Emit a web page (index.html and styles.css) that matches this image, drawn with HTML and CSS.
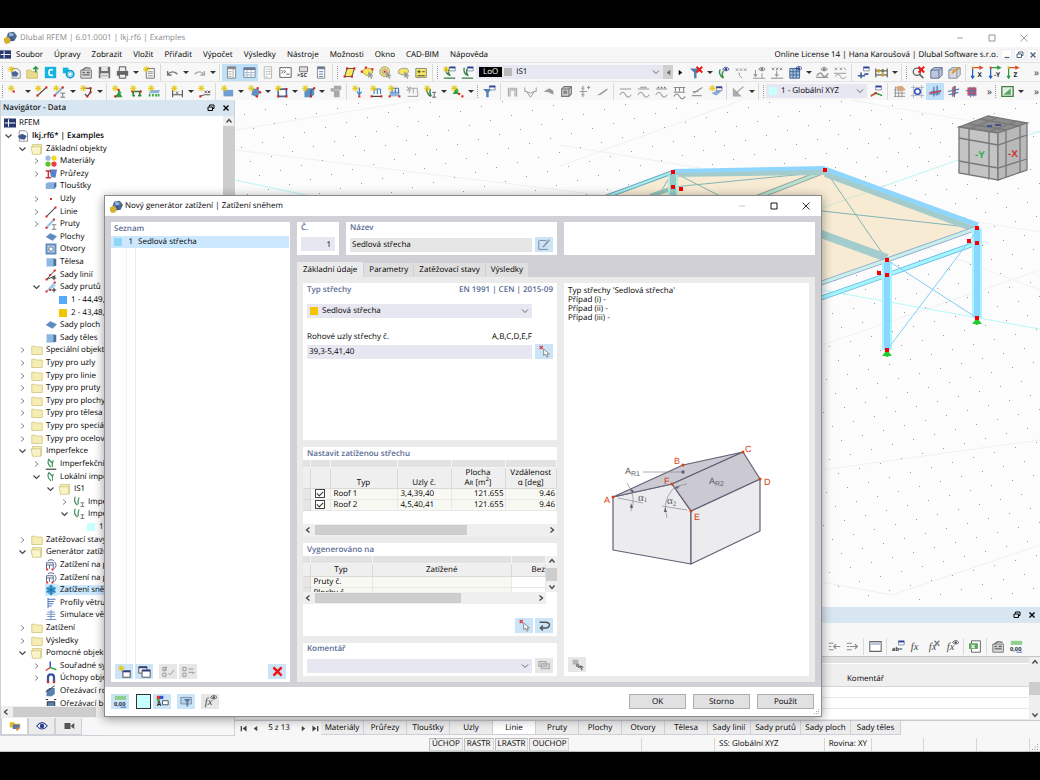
FILE: index.html
```
<!DOCTYPE html>
<html lang="cs">
<head>
  <meta charset="utf-8">
  <title>Dlubal RFEM</title>
  <link rel="stylesheet" href="styles.css">
</head>
<body>
  <div class="app">
    <header class="titlebar">
      <svg class="ic" data-icon="app"></svg>
      <span class="grow">Dlubal RFEM | 6.01.0001 | lkj.rf6 | Examples</span>
      <button class="win" aria-label="Minimalizovat"><svg class="ic" data-icon="min"></svg></button>
      <button class="win" aria-label="Maximalizovat"><svg class="ic" data-icon="max"></svg></button>
      <button class="win" aria-label="Zavřít"><svg class="ic" data-icon="close"></svg></button>
    </header>

    <nav class="menubar">
      <svg class="ic flag" data-icon="rfem"></svg>
      <a href="#">Soubor</a><a href="#">Úpravy</a><a href="#">Zobrazit</a><a href="#">Vložit</a>
      <a href="#">Přiřadit</a><a href="#">Výpočet</a><a href="#">Výsledky</a><a href="#">Nástroje</a>
      <a href="#">Možnosti</a><a href="#">Okno</a><a href="#">CAD-BIM</a><a href="#">Nápověda</a>
      <span class="license">Online License 14 | Hana Karoušová | Dlubal Software s.r.o.</span>
      <button class="mdi" aria-label="Minimalizovat"><svg class="ic" data-icon="mdimin"></svg></button>
      <button class="mdi" aria-label="Obnovit"><svg class="ic" data-icon="restore"></svg></button>
      <button class="mdi" aria-label="Zavřít"><svg class="ic" data-icon="x"></svg></button>
    </nav>

    <div class="toolbar">
      <div class="tools" data-tools=": new open dlubal cloud case save print v page | undo v redo v | *panel *table list console script report | : para poly circ lasso rectsel | : load1 load2"></div>
      <div class="combo combo-case">
        <b class="tag">LoO</b><i class="sw grey"></i>
        <select aria-label="Zatěžovací stav"><option>IS1</option></select>
        <svg class="ic chev" data-icon="chev"></svg>
      </div>
      <button class="step off" aria-label="Předchozí"><svg class="ic" data-icon="prev"></svg></button>
      <button class="step" aria-label="Další"><svg class="ic" data-icon="next"></svg></button>
      <div class="tools" data-tools="funnelx v eyeload vals downeye downvals grideye v beameye beamvals | sup abacus v | : zoomx box boxedit | axx axy axz"></div>
      <span class="more">»</span>
    </div>
    <div class="toolbar">
      <div class="tools" data-tools=": star v line member v polyline v | supp supbeam supsurf | dim v dimxx | surf v hex v opening v solid v extrude | nload mload sload fload impload v sup2 v : funnel | frame momentv plate cube3 cross wedge | bm1 bm2 bm3 bm4 bm5 starsurf | tri v | :"></div>
      <div class="combo combo-cs">
        <i class="sw cyan"></i>
        <select aria-label="Souřadný systém"><option>1 - Globální XYZ</option></select>
        <svg class="ic chev" data-icon="chev"></svg>
      </div>
      <div class="tools" data-tools="csys | handgrid snap *plane1 plane2 plane3"></div>
      <span class="more">»</span>
      <div class="tools" data-tools=": green v"></div>
      <span class="more last">»</span>
    </div>

    <main class="main">
      <aside class="nav">
        <div class="dock-head">
          <b class="grow">Navigátor - Data</b>
          <svg class="ic" data-icon="restore"></svg>
          <svg class="ic" data-icon="x"></svg>
        </div>
        <div class="tree-wrap">
          <ul class="tree" id="tree"></ul>
          <div class="vscroll"><svg class="ic" data-icon="up"></svg><i class="thumb"></i></div>
        </div>
        <div class="hscroll nav-scroll"><svg class="ic" data-icon="left"></svg><i class="thumb"></i></div>
        <div class="nav-tabs">
          <button class="on" aria-label="Data"><svg class="ic" data-icon="navdata"></svg></button>
          <button aria-label="Zobrazit"><svg class="ic" data-icon="eye"></svg></button>
          <button aria-label="Pohledy"><svg class="ic" data-icon="cam"></svg></button>
        </div>
      </aside>

      <section class="work">
        <svg class="scene" viewBox="235 100 805 507" preserveAspectRatio="xMaxYMin slice">
          <g stroke="#f0f0f0" fill="none">
            <path d="M560 166L742 100M560 145L700 168M850 100L1040 133M822 345L1040 270M840 200L1040 232M235 130L420 100M235 150L600 195M822 208L1040 290"/>
            <path d="M822 582L892 595L1040 545M822 470L1040 440"/>
          </g>
          <g id="dots" fill="#999"></g>
          <path d="M822 208L1040 131M822 290L1040 329M235 180L310 196" stroke="#b8f6f6" fill="none"/>

          <!-- roof -->
          <path d="M600 200L673 174L825 170L977 228L887 260L810 287L700 290z" fill="#f7ebd3"/>
          <path d="M822 208L887 185" stroke="#cfe9cf"/>
          <g stroke="#82b5b5" fill="none">
            <path d="M825 170L887 260M822 211L977 228M673 187L825 172M673 172L720 196M673 172L658 196"/>
          </g>
          <path d="M825 171L750 200" stroke="#8f9da5" stroke-width="5"/>
          <path d="M825 171L750 200" stroke="#b7e2cb" stroke-width="3"/>
          <path d="M673 174L825 172" stroke="#a5cccc" stroke-width="6"/>
          <path d="M673 171L825 168" stroke="#8fd6ff" stroke-width="4"/>
          <path d="M825 174L974 229" stroke="#a5cccc" stroke-width="6"/>
          <path d="M825 169L978 225" stroke="#8fd6ff" stroke-width="5"/>
          <path d="M600 199L673 172" stroke="#6ea8c8" stroke-width="4"/>
          <path d="M600 199L673 172" stroke="#a5f0e8" stroke-width="2"/>
          <path d="M650 196L673 188" stroke="#92c4bb" stroke-width="4"/>
          <path d="M673 175V196" stroke="#b4eedc" stroke-width="10"/>
          <path d="M673 175V196" stroke="#98ccc8" stroke-width="6"/>
          <path d="M810 230L887 258" stroke="#a5cccc" stroke-width="8"/>
          <g fill="none">
            <path d="M810 287L887 260L977 228" stroke="#8fa9d8" stroke-width="5"/>
            <path d="M810 287L887 260L977 228" stroke="#c9efe6" stroke-width="3"/>
            <path d="M810 302L887 275L977 243" stroke="#6cbce8" stroke-width="5"/>
            <path d="M810 302L887 275L977 243" stroke="#a5f5fc" stroke-width="3"/>
          </g>
          <!-- columns -->
          <path d="M887 262V350M977 228V318" stroke="#a9f5ff" stroke-width="10"/>
          <path d="M887 262V350M977 228V318" stroke="#8ad8ff" stroke-width="6"/>
          <path d="M887 260L977 318M887 350L976 232" stroke="#7fd0f5"/>
          <path d="M882 356l5-6 5 6zM972 324l5-6 5 6z" fill="#22c832"/>
          <path d="M887 355h0M977 323h0" stroke="#22c832" stroke-width="4" stroke-linecap="round"/>
          <g id="nodes" fill="#f60000"></g>

          <!-- view cube -->
          <g stroke="#777" stroke-width="1.3">
            <path d="M959 127L988 116L1027 123L998 133z" fill="#8d8d8d"/>
            <path d="M959 127L998 133V180L959 173z" fill="#c4c4c4"/>
            <path d="M998 133L1027 123V170L998 180z" fill="#b9b9b9"/>
            <path d="M969 129V175M989 132V178M959 138L998 145L1027 135M959 161L998 168L1027 159M1006 131V177M1020 126V172M969 124L1007 130M980 119L1019 126M969 129L997 118M988 132L1017 121" fill="none"/>
          </g>
          <text x="975" y="158" class="cube-y">-Y</text>
          <text x="1008" y="157" class="cube-x">-X</text>
          <path d="M987 126h5M995 125h6" stroke="#44508c" stroke-width="2"/>
        </svg>

        <div class="dock-head">
          <b class="grow"></b>
          <svg class="ic" data-icon="restore"></svg>
          <svg class="ic" data-icon="x"></svg>
        </div>
        <div class="tools table-tools" data-tools="rowin rowout | tblhead | abbox fx fxx fxeye | excel | case num"></div>
        <div class="sheet">
          <table>
            <thead>
              <tr class="strip"><th></th><th></th></tr>
              <tr><th></th><th>Komentář</th></tr>
            </thead>
            <tbody>
              <tr><td></td><td></td></tr>
              <tr><td></td><td></td></tr>
              <tr><td></td><td></td></tr>
            </tbody>
          </table>
          <div class="vscroll spread"><svg class="ic" data-icon="up"></svg><i class="thumb"></i><svg class="ic" data-icon="down"></svg></div>
        </div>
        <div class="sheet-tabs">
          <button class="pg" aria-label="První"><svg class="ic" data-icon="first"></svg></button>
          <button class="pg" aria-label="Předchozí"><svg class="ic" data-icon="prev"></svg></button>
          <span class="pages">5 z 13</span>
          <button class="pg" aria-label="Další"><svg class="ic" data-icon="next"></svg></button>
          <button class="pg" aria-label="Poslední"><svg class="ic" data-icon="last"></svg></button>
          <button class="tab">Materiály</button><button class="tab">Průřezy</button><button class="tab">Tloušťky</button>
          <button class="tab">Uzly</button><button class="tab on">Linie</button><button class="tab">Pruty</button>
          <button class="tab">Plochy</button><button class="tab">Otvory</button><button class="tab">Tělesa</button>
          <button class="tab">Sady linií</button><button class="tab wide">Sady prutů</button>
          <button class="tab wide">Sady ploch</button><button class="tab wide">Sady těles</button>
        </div>
      </section>
    </main>

    <footer class="status">
      <span class="box">ÚCHOP</span><span class="box">RASTR</span><span class="box">LRASTR</span><span class="box">OUCHOP</span>
      <span class="cell w73"></span><span class="cell w73"></span>
      <span class="cell w109">SS: Globální XYZ</span>
      <span class="cell w47">Rovina: XY</span>
      <span class="cell w53"></span><span class="cell w53"></span><span class="cell w53"></span>
      <svg class="ic grip" data-icon="grip"></svg>
    </footer>

    <div class="dialog" role="dialog" aria-label="Nový generátor zatížení">
      <header class="dlg-title">
        <svg class="ic" data-icon="app"></svg>
        <span class="grow">Nový generátor zatížení | Zatížení sněhem</span>
        <button class="win faint" aria-label="Minimalizovat"><svg class="ic" data-icon="min"></svg></button>
        <button class="win" aria-label="Maximalizovat"><svg class="ic" data-icon="max"></svg></button>
        <button class="win" aria-label="Zavřít"><svg class="ic" data-icon="close"></svg></button>
      </header>

      <div class="dlg-body">
        <section class="list-pane">
          <h2>Seznam</h2>
          <div class="list">
            <div class="list-row"><i class="sw sky"></i><span class="num">1</span><span class="name">Sedlová střecha</span></div>
          </div>
          <div class="list-tools">
            <button class="ibtn" aria-label="Nový"><svg class="ic" data-icon="newwin"></svg></button>
            <button class="ibtn" aria-label="Kopírovat"><svg class="ic" data-icon="copywin"></svg></button>
            <button class="ibtn off gap" aria-label="Vybrat vše"><svg class="ic" data-icon="checks"></svg></button>
            <button class="ibtn off" aria-label="Obrátit výběr"><svg class="ic" data-icon="checks2"></svg></button>
            <button class="ibtn last" aria-label="Smazat"><svg class="ic" data-icon="redx"></svg></button>
          </div>
        </section>

        <div class="right-pane">
          <div class="head-row">
            <div class="card c-num">
              <label for="no">Č.</label>
              <input id="no" class="field right" value="1">
            </div>
            <div class="card c-name">
              <label for="name">Název</label>
              <div class="line">
                <input id="name" class="field ro grow" value="Sedlová střecha" readonly>
                <button class="ibtn" aria-label="Upravit"><svg class="ic" data-icon="edit"></svg></button>
              </div>
            </div>
            <div class="card grow"></div>
          </div>

          <div class="tabs">
            <button class="on">Základní údaje</button><button>Parametry</button><button>Zatěžovací stavy</button><button>Výsledky</button>
          </div>

          <div class="page">
            <div class="form-col">
              <div class="card c-type">
                <h2><span>Typ střechy</span><span>EN 1991 | CEN | 2015-09</span></h2>
                <div class="combo combo-roof">
                  <i class="sw gold"></i>
                  <select aria-label="Typ střechy"><option>Sedlová střecha</option></select>
                  <svg class="ic chev" data-icon="chev"></svg>
                </div>
                <div class="label-row"><label for="nodesIn">Rohové uzly střechy č.</label><span>A,B,C,D,E,F</span></div>
                <div class="line">
                  <input id="nodesIn" class="field grow" value="39,3-5,41,40">
                  <button class="ibtn" aria-label="Vybrat uzly"><svg class="ic" data-icon="pick"></svg></button>
                </div>
              </div>

              <div class="card c-set">
                <h2>Nastavit zatíženou střechu</h2>
                <table class="grid">
                  <colgroup><col class="k7"><col class="k20"><col class="k67"><col class="k54"><col class="k54"><col></colgroup>
                  <thead>
                    <tr class="strip"><th></th><th></th><th></th><th></th><th></th><th></th></tr>
                    <tr class="tall"><th></th><th></th><th>Typ</th><th>Uzly č.</th><th>Plocha<br>A<small>R</small> [m<sup>2</sup>]</th><th>Vzdálenost<br>α [deg]</th></tr>
                  </thead>
                  <tbody>
                    <tr><th></th><td><input type="checkbox" aria-label="Roof 1" checked></td><td>Roof 1</td><td>3,4,39,40</td><td class="n">121.655</td><td class="n">9.46</td></tr>
                    <tr><th></th><td><input type="checkbox" aria-label="Roof 2" checked></td><td>Roof 2</td><td>4,5,40,41</td><td class="n">121.655</td><td class="n">9.46</td></tr>
                  </tbody>
                </table>
                <div class="hscroll"><svg class="ic" data-icon="left"></svg><i class="thumb t60"></i><svg class="ic end" data-icon="right"></svg></div>
              </div>

              <div class="card c-gen">
                <h2>Vygenerováno na</h2>
                <div class="gen-wrap">
                  <div class="gen-clip">
                    <table class="grid">
                      <colgroup><col class="k7"><col class="k62"><col><col class="k34"></colgroup>
                      <thead>
                        <tr class="strip"><th></th><th></th><th></th><th></th></tr>
                        <tr class="mid"><th></th><th>Typ</th><th>Zatížené</th><th class="e">Bez</th></tr>
                      </thead>
                      <tbody>
                        <tr><th></th><td>Pruty č.</td><td></td><td class="w"></td></tr>
                        <tr><th></th><td>Plochy č.</td><td></td><td class="w"></td></tr>
                      </tbody>
                    </table>
                  </div>
                  <div class="vscroll spread"><svg class="ic" data-icon="up"></svg><i class="thumb"></i><svg class="ic" data-icon="down"></svg></div>
                </div>
                <div class="hscroll short"><svg class="ic" data-icon="left"></svg><i class="thumb t60"></i><svg class="ic end" data-icon="right"></svg></div>
                <div class="gen-tools">
                  <button class="ibtn" aria-label="Vybrat"><svg class="ic" data-icon="pick"></svg></button>
                  <button class="ibtn" aria-label="Zpět"><svg class="ic" data-icon="back"></svg></button>
                </div>
              </div>

              <div class="card c-com">
                <label for="com">Komentář</label>
                <div class="line">
                  <div class="combo grow">
                    <select id="com"><option></option></select>
                    <svg class="ic chev" data-icon="chev"></svg>
                  </div>
                  <button class="ibtn off" aria-label="Komentáře"><svg class="ic" data-icon="comments"></svg></button>
                </div>
              </div>
            </div>

            <div class="card preview">
              <p>Typ střechy 'Sedlová střecha'<br>Případ (i) -<br>Případ (ii) -<br>Případ (iii) -</p>
              <svg class="house" viewBox="600 440 180 130">
                <g stroke="#625f76" stroke-width="1.2" stroke-linejoin="round">
                  <path d="M613 497L672 484L691 511V564L613 550z" fill="#ececee"/>
                  <path d="M691 511L760 479V531L691 564z" fill="#ececee"/>
                  <path d="M613 497L683 465L743 452L672 484z" fill="#cbc9d1"/>
                  <path d="M672 484L743 452L760 479L691 511z" fill="#cbc9d1"/>
                </g>
                <g stroke="#8a8894" stroke-width=".7" fill="none">
                  <path d="M643 472H683M618 498L643 503M627 483Q637 497 631 511M662 506L687 510M687 484Q675 486 672 490Q662 502 667 518"/>
                </g>
                <circle cx="683" cy="472" r="1.7" fill="#625f76"/>
                <path d="M633 493l-3-3 1-1 3 2zM631 503l2 5h-3zM665 507l2 5h-3zM675 487l5-1-3 3z" fill="#625f76"/>
                <g fill="#d8400f">
                  <circle cx="613" cy="497" r="1.5"/><circle cx="683" cy="465" r="1.5"/><circle cx="743" cy="452" r="1.5"/>
                  <circle cx="760" cy="479" r="1.5"/><circle cx="691" cy="511" r="1.5"/><circle cx="672" cy="484" r="1.5"/>
                  <text x="604" y="503">A</text><text x="674" y="464">B</text><text x="745" y="452">C</text>
                  <text x="764" y="485">D</text><text x="694" y="520">E</text><text x="664" y="484">F</text>
                </g>
                <g fill="#5d5a68">
                  <text x="625" y="474">A<tspan class="sub" dy="2">R1</tspan></text>
                  <text x="709" y="484">A<tspan class="sub" dy="2">R2</tspan></text>
                  <text class="alpha" x="638" y="501">α<tspan class="sub" dy="1">1</tspan></text>
                  <text class="alpha" x="667" y="504">α<tspan class="sub" dy="2">2</tspan></text>
                </g>
              </svg>
              <button class="ibtn off" aria-label="Zobrazení"><svg class="ic" data-icon="render"></svg></button>
            </div>
          </div>
        </div>
      </div>

      <footer class="dlg-foot">
        <button class="ibtn" aria-label="Jednotky"><svg class="ic" data-icon="num"></svg></button>
        <i class="swatch"></i>
        <button class="ibtn" aria-label="Barvy"><svg class="ic" data-icon="colors"></svg></button>
        <button class="ibtn gap" aria-label="Pohled"><svg class="ic" data-icon="view"></svg></button>
        <button class="ibtn off gap" aria-label="Vzorec"><svg class="ic" data-icon="fxeye"></svg></button>
        <span class="grow"></span>
        <button class="push">OK</button><button class="push">Storno</button><button class="push">Použít</button>
        <svg class="ic grip" data-icon="grip"></svg>
      </footer>
    </div>
  </div>
  <script src="script.js"></script>
</body>
</html>
```

FILE: styles.css
```
* { box-sizing: border-box; }
body {
  margin: 0; padding: 28px 0 28px; height: 100vh; background: #000; color: #000;
  font: 8px/10px "Open Sans", "Noto Sans", sans-serif; overflow: hidden;
  text-rendering: geometricPrecision;
}
button, input, select { font: inherit; color: inherit; border: 0; padding: 0; margin: 0; background: none; border-radius: 0; text-rendering: inherit; }
select { appearance: none; flex: 1; min-width: 0; }
h2, label { display: block; margin: 0; font-size: 8px; line-height: 10px; font-weight: 600; color: #5a6b94; }
i { display: block; }
.ic { display: block; width: 13px; height: 13px; flex: none; overflow: visible; }
.grow { flex: 1; }

.app { position: relative; height: 100%; display: flex; flex-direction: column; background: #f7f7f7; overflow: hidden; }

/* window frame and menus */
.titlebar { display: flex; align-items: center; height: 19px; background: #fff; color: #8a8a8a; padding: 0 0 0 4px; gap: 3px; }
.win { width: 32px; height: 18px; display: grid; place-items: center; }
.titlebar .win { color: #888; margin-left: -3px; }
.win .ic { width: 8px; height: 8px; }
.faint { color: #bbb; }
.menubar { display: flex; align-items: center; height: 15px; gap: 11px; padding-right: 2px; font-weight: 500; background: #f6f6f6; }
.menubar a { color: inherit; text-decoration: none; }
.flag { width: 11px; margin-right: -6px; }
.license { margin-left: auto; margin-right: -8px; }
.mdi { width: 11px; height: 11px; background: #fff; display: grid; place-items: center; margin-right: -9px; border: 1px solid #eee; flex: none; }
.mdi:last-child { margin-right: 0; }
.mdi .ic { width: 8px; height: 8px; color: #51627e; }

.toolbar { display: flex; align-items: center; height: 19px; border-top: 1px solid #e4e4e4; background: #f7f7f7; }
.tools { display: flex; align-items: center; flex: none; }
.tb { width: 18px; height: 17px; display: grid; place-items: center; flex: none; }
.tb.on { background: #bfe0f7; }
.drop { width: 9px; height: 17px; display: grid; place-items: center; flex: none; }
.drop::after { content: ""; border: 3px solid transparent; border-top: 3px solid #333; border-bottom: 0; }
.sep { width: 1px; height: 17px; background: #dadada; margin: 0 2px; }
.handle { width: 1px; height: 13px; margin: 0 2px; border-left: 1px dotted #9a9a9a; }
.more { margin: 0 1px 0 auto; color: #444; font-size: 10px; padding-left: 5px; }
.more.last { margin-left: 4px; }
.combo { display: flex; align-items: center; gap: 4px; height: 14px; background: #e7e7f1; padding: 0 3px; }
.combo select { height: 14px; font-weight: 500; }
.chev { width: 8px; height: 8px; color: #555; }
.sw { width: 8px; height: 8px; flex: none; }
.grey { background: #b9b9b9; }
.cyan { background: #c8ffff; }
.sky { background: #8dd6f5; }
.gold { background: #f5c400; }
.combo-case { width: 187px; }
.combo-cs { width: 101px; }
.tag { background: #000; color: #fff; padding: 0 4px; font-weight: 500; }
.combo-case .tag { margin-right: -2px; }
.step { width: 10px; height: 14px; display: grid; place-items: center; }
.step .ic { width: 7px; height: 7px; }
.step.off { background: #d0d0d0; color: #666; }
.step:not(.off) { width: 14px; }

/* docked navigator */
.main { flex: 1; min-height: 0; display: flex; }
.nav { width: 235px; flex: none; display: flex; flex-direction: column; border: solid #cfcfd8; border-width: 0 1px 1px; background: #f7f7f7; }
.dock-head { display: flex; align-items: center; gap: 7px; height: 16px; flex: none; padding: 0 4px 0 2px; background: #d8e6f2; }
.dock-head .ic { width: 8px; height: 8px; }
.dock-head b { font-weight: 600; color: #222; }
.tree-wrap { flex: 1; min-height: 0; display: flex; overflow: hidden; background: #fff; }
.tree { flex: 1; list-style: none; margin: 1px 0 -4px; padding: 0; display: grid; grid-auto-rows: minmax(0, 1fr); white-space: nowrap; }
.tree li { display: flex; align-items: center; gap: 2px; overflow: hidden; font-weight: 500; }
.tree .ic { width: 12px; height: 12px; }
.tree .exp { width: 12px; height: 8px; color: #666; }
.tree .pic { margin-right: 1px; }
.tree .sw { margin-right: 2px; }
.tree .l0 .exp { display: none; }
.tree .bold { font-weight: 600; }
.tree .sel span { background: #cce8ff; flex: 1; margin-left: -3px; padding-left: 3px; }
.tree .sel .pic { background: #cce8ff; }
.l0 { padding-left: 3px; }
.l1 { padding-left: 2px; }
.l2 { padding-left: 16px; }
.l3 { padding-left: 30px; }
.l4 { padding-left: 44px; }
.l5 { padding-left: 58px; }
.l6 { padding-left: 72px; }

.vscroll { width: 11px; background: #efefef; display: flex; flex-direction: column; align-items: center; flex: none; }
.vscroll .ic, .hscroll .ic { width: 10px; height: 10px; padding: 1px; }
.vscroll .thumb { width: 11px; background: #cdcdcd; height: 540px; }
.vscroll.spread { justify-content: space-between; }
.vscroll.spread .thumb { height: 13px; }
.hscroll { height: 12px; display: flex; align-items: center; background: #efefef; gap: 2px; flex: none; }
.hscroll .thumb { height: 10px; width: 83px; background: #cdcdcd; }
.hscroll .t60 { width: 60%; }
.hscroll .end { margin-left: auto; }
.nav-tabs { display: flex; height: 17px; }
.nav-tabs button { width: 27px; display: grid; place-items: center; border: 1px solid #d0d0d8; border-top: 0; background: #ececec; }
.nav-tabs .on { background: #fff; }
.nav-tabs .ic { width: 12px; height: 12px; }

/* model view and table dock */
.work { flex: 1; min-width: 0; display: flex; flex-direction: column; }
.scene { flex: 1; min-height: 0; width: 100%; background: #fcfcfc; }
.cube-y, .cube-x { font: bold 10px "Liberation Sans", sans-serif; fill: #2fae43; }
.cube-x { fill: #c33; }
.table-tools { height: 34px; padding: 14px 15px 0 0; justify-content: flex-end; border-bottom: 1px solid #c4c4cc; }
.sheet { display: flex; height: 63px; flex: none; }
.sheet table { flex: 1; border-collapse: collapse; table-layout: fixed; }
.sheet th { background: #efefef; height: 23px; vertical-align: bottom; font-weight: 500; padding: 0 0 2px; border-bottom: 1px solid #d5d5d5; }
.sheet .strip th { height: 6px; padding: 0; background: #e2e2e2; border-bottom: 1px solid #fff; }
.sheet th:last-child { width: 327px; }
.sheet td { background: #fff; height: 11px; border-bottom: 1px solid #e8e8e8; padding: 0; }
.sheet-tabs { display: flex; height: 15px; flex: none; border-top: 1px solid #c9c9d2; margin-bottom: 1px; padding-left: 2px; }
.pg { width: 12px; display: grid; place-items: center; color: #444; }
.pg .ic { width: 7px; height: 7px; }
.pages { width: 36px; text-align: center; line-height: 14px; }
.tab { width: 43px; background: #ececec; border: 1px solid #cfcfd8; border-top: 0; border-left: 0; font-weight: 500; white-space: nowrap; }
.tab.on { background: #fff; }
.tab.wide { width: 50px; }

.status { display: flex; align-items: stretch; height: 16px; flex: none; padding: 2px 1px 0 429px; gap: 1px; border-bottom: 1px solid #bcc4bf; }
.status .box { border: 1px solid #d5d5d5; border-left-color: #bbb; border-top-color: #bbb; padding: 0 2px; font-weight: 500; background: #f0f0f0; }
.status .cell { border-right: 1px solid #d6d6d6; padding: 1px 3px; font-weight: 500; white-space: nowrap; }
.w73 { width: 72px; }
.w109 { width: 109px; }
.w47 { width: 46px; }
.w53 { width: 52px; }
.grip { margin-left: auto; align-self: flex-end; width: 8px; height: 8px; }

/* dialog floats over the work area */
.dialog {
  position: absolute; left: 104px; top: 167px; width: 718px; height: 522px; display: flex; flex-direction: column;
  background: #fff; border: 1px solid #8b8b8b; box-shadow: 0 2px 10px rgba(0, 0, 0, .4);
}
.dlg-title { display: flex; align-items: center; height: 20px; padding-left: 5px; gap: 2px; flex: none; }
.dlg-title .win { width: 30px; }
.dlg-body { flex: 1; min-height: 0; display: flex; gap: 7px; padding: 6px 6px 5px; background: #d0d0d6; }
.list-pane { width: 179px; display: flex; flex-direction: column; background: #fff; }
.list-pane h2 { padding: 2px 3px; }
.list { flex: 1; background: linear-gradient(#f1f1f1, #f1f1f1) 15px 0 / 1px 100% no-repeat, linear-gradient(#ebebeb, #ebebeb) 24px 0 / 1px 100% no-repeat; }
.list-row { display: flex; align-items: center; height: 12px; margin-right: 1px; padding-left: 3px; background: #cce8ff; font-weight: 500; }
.list-row .num { width: 13px; text-align: right; padding-right: 2px; }
.list-row .name { padding-left: 3px; }
.list-tools { display: flex; gap: 2px; padding: 0 4px 3px; }
.ibtn { width: 18px; height: 15px; background: #cbe4f7; display: grid; place-items: center; flex: none; }
.ibtn.off { background: #e7e7e7; }
.ibtn.gap { margin-left: 4px; }
.ibtn.last { margin-left: auto; }

.right-pane { flex: 1; min-width: 0; display: flex; flex-direction: column; }
.head-row { display: flex; gap: 7px; height: 33px; }
.card { background: #fff; padding: 1px 4px; }
.c-num { width: 42px; }
.c-name { width: 211px; }
.head-row label { margin-bottom: 4px; }
.line { display: flex; gap: 3px; align-items: center; }
.field { height: 14px; background: #e7e7f1; padding: 0 2px; width: 100%; min-width: 0; font-weight: 500; }
.field.ro { background: #e6e6e6; }
.right { text-align: right; padding-right: 4px; }
.tabs { display: flex; margin-top: 7px; height: 15px; gap: 1px; align-items: flex-end; }
.tabs button { height: 14px; padding: 0 5px; background: #dfdfdf; font-weight: 500; white-space: nowrap; }
.tabs .on { background: #ebebeb; height: 15px; padding: 0 6px; }
.page { flex: 1; min-height: 0; display: flex; gap: 7px; padding: 6px; background: #ebebeb; }
.form-col { width: 254px; display: flex; flex-direction: column; gap: 7px; }
.form-col .card h2 { padding: 1px 0; display: flex; justify-content: space-between; }
.c-type { flex: 1; }
.combo-roof { margin: 8px 21px 14px 0; }
.label-row { display: flex; justify-content: space-between; margin: 0 21px 2px 0; font-weight: 500; }
.label-row label { color: #000; font-weight: 500; }
.form-col .c-set, .form-col .c-gen { padding-left: 0; padding-right: 0; }
.form-col .c-set h2, .form-col .c-gen h2 { padding-left: 4px; }
.c-set { height: 89px; display: flex; flex-direction: column; }
.c-set .hscroll { margin-top: auto; margin-bottom: -1px; }
.grid { width: 100%; table-layout: fixed; border-collapse: collapse; }
.grid th { background: #efefef; border: 1px solid #d9d9d9; border-width: 0 1px 1px 0; padding: 0; font-weight: 500; vertical-align: bottom; }
.grid .strip th { height: 7px; background: #e2e2e2; border-color: #f5f5f5; }
.grid .tall th { height: 21px; line-height: 10px; }
.grid .mid th { height: 13px; vertical-align: middle; }
.grid .e { text-align: right; }
.grid small, .grid sup { font-size: 6px; line-height: 1px; }
.grid td { height: 11px; line-height: 10px; padding: 0 3px; background: #f9f9f3; border: 1px solid #e8e8e8; border-width: 0 1px 1px 0; font-weight: 500; white-space: nowrap; }
.grid .n { text-align: right; padding-right: 1px; }
.grid .w { background: #fff; }
.grid tbody th { background: #e6e6e6; }
.k7 { width: 7px; }
.k20 { width: 20px; }
.k67 { width: 67px; }
.k54 { width: 54px; }
.k62 { width: 62px; }
.k34 { width: 34px; }
input[type=checkbox] { appearance: none; display: block; width: 10px; height: 9px; margin: 0 auto; background: #fff; border: 1px solid #444; }
input[type=checkbox]:checked::after { content: ""; display: block; width: 5px; height: 3px; margin: 1px; border: solid #333; border-width: 0 0 1px 1px; transform: rotate(-45deg); }
.c-gen { height: 93px; }
.gen-wrap { display: flex; height: 36px; }
.gen-clip { flex: 1; overflow: hidden; }
.hscroll.short { margin-right: 11px; }
.gen-tools { display: flex; justify-content: flex-end; gap: 2px; padding: 14px 4px 0 0; }
.c-com { height: 33px; }
.c-com label { margin-bottom: 4px; }
.preview { flex: 1; display: flex; flex-direction: column; }
.preview p { margin: 2px 0 0; line-height: 9px; font-weight: 500; }
.preview .house { width: 180px; margin: 118px 0 0 32px; font: 9px "Liberation Sans", sans-serif; }
.house .sub { font-size: 7px; }
.house .alpha { font-size: 11px; font-family: "Liberation Serif", serif; }
.preview .ibtn { margin-top: auto; margin-bottom: 3px; }

.dlg-foot { display: flex; align-items: center; height: 29px; padding: 0 7px 0 6px; gap: 2px; flex: none; position: relative; }
.swatch { width: 15px; height: 15px; border: 1px solid #333; background: #c8ffff; margin-left: 5px; }
.push { width: 57px; height: 15px; background: #e1e1e1; border: 1px solid #adadad; margin-left: 5px; font-weight: 500; }
.dlg-foot .grip { position: absolute; right: 1px; bottom: 1px; width: 7px; height: 7px; }
```

FILE: script.js
```
const p = (d, s, w = 1.4, f = "none") => `<path d="${d}" stroke="${s}" stroke-width="${w}" fill="${f}"/>`;
const f = (d, c) => `<path d="${d}" fill="${c}"/>`;
const dot = (x, y, c = "#e02020") => `<rect x="${x - 1.3}" y="${y - 1.3}" width="2.6" height="2.6" fill="${c}"/>`;
const star = p("M4 0v8M0 4h8M1 1l6 6M7 1l-6 6", "#e6c400", 1.2);
const cursor = f("M9 6v9l2-2 1.500 3 1.500-1-1.500-2.500h3z", "#999");
const box = (x, y, c = "#6d7f9c") => p(`M${x} ${y}h7v5h-7z`, c, 1, "#fff") + f(`M${x} ${y}h7v2h-7z`, "#2b3f9c");
const eyeAt = (x, y, c = "#2b3f8c") => `<g transform="translate(${x} ${y})">${p("M0 3q4-5 8 0q-4 4-8 0z", c, 1)}<circle cx="4" cy="3" r="1.600" fill="${c}"/></g>`;
const redx = p("M8 1l7 7M15 1l-7 7", "#f01818", 2.4);
const beam = p("M1 5h14M1 12q4-6 7 0t7 0", "#9a9a9a", 1.3);
const curve = p("M4 2q-2 7 5 10M8 3q-3 4 1 9M1 15h14", "#3b7f4b", 1.6);
const T = (x, y, t, c, s = 7) => `<text x="${x}" y="${y - 1}" font-size="${s}" font-weight="700" fill="${c}">${t}</text>`;

const icons = {
  app: f("M5 2l7-1 4 5-3 6-7 1-3-5z", "#4a6896") + f("M6 3l6-1 1 3-6 2z", "#9fb6d8") + f("M0 9l5-2 3 3-1 5-5 1-2-3z", "#d8b030") + p("M8 7l3 5M13 5l-3-3", "#26416e", 1),
  min: p("M2 8h12", "currentColor", 1.6), max: p("M2 2h12v12h-12z", "currentColor", 1.8), close: p("M1 1l14 14M15 1L1 15", "currentColor", 1.6),
  x: p("M3 3l10 10M13 3L3 13", "currentColor", 2.8), mdimin: p("M3 13h10", "currentColor", 2.5),
  restore: p("M5 5V2h9v7h-3M2 6h9v7H2z", "currentColor", 2), chev: p("M2 5l6 6 6-6", "currentColor", 1.8),
  first: p("M3 2v12", "currentColor", 3) + f("M15 1v14L6 8z", "currentColor"), last: p("M13 2v12", "currentColor", 3) + f("M1 1v14l9-7z", "currentColor"),
  prev: f("M12 2v12L4 8z", "currentColor"), next: f("M4 2v12l8-6z", "currentColor"),
  up: p("M3 11l5-6 5 6", "#444", 2.6), down: p("M3 5l5 6 5-6", "#444", 2.6), left: p("M11 3L5 8l6 5", "#444", 2.6), right: p("M5 3l6 5-6 5", "#444", 2.6),
  grip: f("M12 2h2v2h-2zM12 7h2v2h-2zM12 12h2v2h-2zM7 7h2v2H7zM7 12h2v2H7zM2 12h2v2H2z", "#999"),
  rfem: f("M0 2h16v12H0z", "#27376f") + p("M1 8h14M6 3v10", "#fff", 1.4),
  new: p("M5 3h6l4 3v9H5z", "#888", 1, "#eee") + f("M4 8l5-2 4 3-2 4H6z", "#4a6896") + star,
  open: f("M1 5h5l1 2h7v8H1z", "#e8dc8c") + p("M1 5h5l1 2h7v8H1z", "#c9b860", 1) + p("M12 8V2M9 4l3-3 3 3", "#2b9b3d", 2),
  dlubal: f("M1 1h14v14H1z", "#12b4e2") + p("M11 5q-5-2-5 3t5 3", "#fff", 2),
  cloud: f("M1 2h7v7H1z", "#12b4e2") + `<circle cx="10" cy="10" r="4.500" fill="#8fd9ee" stroke="#12a0cc" stroke-width="2"/><circle cx="10" cy="10" r="1.500" fill="#fff"/>`,
  case: p("M1 5h13v10H1z", "#777", 1.2, "#ddd") + p("M3 8h3M8 8h4M3 11h9M3 5l4-3 6 1", "#666", 1.6),
  save: f("M1 1h14v14H1z", "#6f6f6f") + f("M4 1h8v5H4zM3 9h10v6H3z", "#e8e8e8") + p("M4 12h8", "#999", 1),
  print: f("M1 6h14v6H1z", "#666") + p("M4 6V1h8v5M4 10v5h8v-5z", "#555", 1.2, "#eee"),
  page: p("M4 3h10v12H4z", "#777", 1.2, "#f4f4f4") + p("M6 7h6M6 9h6M6 12h6", "#888", 1) + star,
  undo: p("M2 6v5h5M2 11q5-7 12-1", "#777", 1.8), redo: p("M14 6v5H9M14 11q-5-7-12-1", "#aaa", 1.8),
  panel: p("M3 1h10v14H3z", "#777", 1, "#fff") + f("M3 1h10v3H3z", "#888") + p("M10 4v11M4 7h4M4 10h4M4 13h4", "#999", 1),
  table: p("M1 2h14v12H1z", "#6b7b96", 1, "#fff") + f("M1 2h14v3H1z", "#6b7b96") + p("M1 8h14M1 11h14M5 5v9M10 5v9", "#9fb0c8", 1),
  list: p("M4 1h9v14H4z", "#aaa", 1, "#fff") + p("M6 4h2M9 4h3M6 7h2M9 7h3M6 10h2M9 10h3M6 13h2", "#bbb", 1.4),
  console: p("M1 2h14v12H1z", "#666", 1.2, "#fff") + p("M3 5l2 2-2 2M6 5l2 2-2 2M9 10h4", "#555", 1.2),
  script: p("M3 1h10v6H3z", "#777", 1.2, "#ddd") + T(0, 15, "&gt;SC", "#333", 7),
  report: p("M3 1h9v14H3z", "#777", 1, "#fff") + f("M3 1h9v3H3z", "#6b7b96") + p("M5 7h5M5 10h5M5 13h5", "#5c82b8", 1.2),
  para: p("M5 3h9l-3 10H2z", "#333", 1, "#f5e860") + dot(5, 3) + dot(14, 3) + dot(2, 13) + dot(11, 13),
  poly: p("M1 7l5-5 8 2v5l-7 3z", "#a09030", 1, "#f5e860") + dot(1, 7) + dot(6, 2) + dot(14, 4) + cursor,
  circ: `<circle cx="7" cy="7" r="6" fill="#f5e860" stroke="#888"/><circle cx="7" cy="7" r="3" fill="#fff" stroke="#888"/>` + dot(7, 7) + cursor,
  lasso: p("M2 9q-2-5 5-6t7 3q0 5-7 5z", "#888", 1, "#f5e860") + cursor,
  rectsel: p("M1 3h13v11H1z", "#777", 1, "#f5e860") + p("M3 7h4M5 5v4M9 7h3M3 12h9", "#444", 1.2),
  load1: curve + box(8, 1) + star, load2: curve + box(8, 1),
  funnelx: f("M0 3h12L8 8v7H5V8z", "#4f7fb5") + redx, funnel: f("M0 5h11L7 9v6H4V9z", "#4f7fb5") + box(8, 1),
  eyeload: p("M4 4q-3 6 4 11M8 6q-3 4 0 9", "#3b8f4b", 1.8) + eyeAt(7, 1),
  vals: p("M1 3l3 3M4 3L1 6M6 3l3 3M9 3L6 6M11 3l3 3M14 3l-3 3M5 8q-1 4 4 7", "#999", 1.2),
  downeye: p("M3 5v7M1 10l2 3 2-3M0 15h15M11 9v5", "#999", 1.3) + eyeAt(7, 1, "#777"),
  downvals: p("M1 2l3 3M4 2L1 5M6 2l3 3M9 2L6 5M11 2l3 3M14 2l-3 3M7 6v6M5 10l2 3 2-3M0 15h15", "#888", 1.2),
  grideye: p("M1 3h12v12H1zM5 3v12M9 3v12M1 7h12M1 11h12", "#44688f", 1.2, "#a9c6e2") + eyeAt(8, 0),
  beameye: p("M1 12q4-6 7-1t7-2M0 14h15", "#999", 1.8) + eyeAt(6, 1, "#777"),
  beamvals: p("M1 2l3 3M4 2L1 5M7 2l3 3M10 2L7 5M12 2l3 3M0 9h15M1 13q5-5 7 0t7 0", "#999", 1.2),
  sup: p("M1 12h9M5 8v7M9 10h5", "#4060a0", 2) + box(8, 1),
  abacus: p("M1 3v11M15 3v11M1 6h14M1 11h14", "#444", 1.2) + f("M3 4h3v4H3zM8 9h3v4H8z", "#c8a020") + f("M8 4h3v4H8z", "#608040"),
  zoomx: `<circle cx="6" cy="7" r="4.500" fill="none" stroke="#666" stroke-width="1.600"/>` + p("M9 10l5 5", "#666", 2) + redx,
  box: p("M1 5l4-3h10v9l-4 4H1zM1 5h10v10M11 5l4-3", "#5f6f90", 1.2, "#bcc6dc"),
  boxedit: p("M1 5l4-3h10v9l-4 4H1zM1 5h10v10M11 5l4-3", "#8a90a0", 1.2, "#d4d8e0") + p("M5 9l8-7", "#e89a20", 2.4),
  axx: p("M2 2h11M10 0l4 2-4 2", "#e05030", 1.500) + p("M2 2v12M0 12l2 3 2-3", "#2060c0", 1.500) + dot(2, 2, "#e0b020") + T(8, 15, "X", "#222", 8),
  axy: p("M2 2h11M10 0l4 2-4 2", "#2a9a40", 1.500) + p("M2 2v12M0 12l2 3 2-3", "#2060c0", 1.500) + dot(2, 2, "#e05030") + T(6, 15, "-Y", "#222", 8),
  axz: p("M2 2h11M10 0l4 2-4 2", "#e05030", 1.500) + p("M2 2v12M0 12l2 3 2-3", "#2a9a40", 1.500) + dot(2, 2, "#e0b020") + T(8, 15, "Z", "#222", 8),
  star: star + dot(7, 8), line: p("M3 13L14 3", "#333") + dot(3, 13) + dot(14, 3) + star,
  member: p("M2 13L12 3", "#8ab0d8", 2.500) + dot(2, 13) + dot(12, 3) + p("M9 10h6M12 10v5M9 15h6", "#778", 1.2) + star,
  polyline: p("M4 4h9v5l-4 5-3-3", "#333") + dot(13, 4) + dot(13, 9) + dot(9, 14) + star,
  supp: f("M8 5l4 5h-2l3 5H3l4-5z", "#2ba040") + dot(8, 6) + dot(4, 14) + star,
  supbeam: p("M2 8h12M3 13h3M10 13h4M4 8v5M12 8v5", "#2b8038", 2) + dot(3, 8) + dot(13, 8) + star,
  supsurf: f("M3 6h12l-2 4H1z", "#8fb5da") + p("M2 11v3M6 11v3M10 11v3M13 11v3", "#2ba040", 2) + star,
  dim: p("M2 6v9M14 6v9M2 12h12", "#555", 1.4) + p("M6 8l3 3M9 8l-3 3", "#555", 1) + star,
  dimxx: p("M2 14l6-2h7M8 7l3 3M11 7l-3 3M12 7l3 3M15 7l-3 3", "#555", 1.2) + dot(3, 14) + star,
  surf: f("M3 6h12v8H3z", "#6fa0d0") + star, hex: f("M6 5l6-1 3 5-4 6-7-3z", "#5f90c4") + dot(12, 4) + dot(15, 9) + dot(11, 14) + star,
  opening: p("M4 5h10v9H4z", "#44689a", 2, "#fff") + dot(4, 14) + dot(14, 5) + dot(14, 14) + star,
  solid: f("M3 7l4-3h8v8l-4 3H3z", "#5f90c4") + p("M11 7v8M11 7l4-3", "#345", 1) + dot(15, 4) + dot(11, 14) + star,
  extrude: f("M6 1h9v5h-2v9H6V8H2V4h4z", "#a8a8a8") + p("M6 6h7", "#ddd", 1),
  nload: p("M9 3v8M6 8l3 4 3-4", "#3a80c8", 1.500) + dot(9, 14) + star,
  mload: p("M5 5v6M9 5v6M13 5v6M5 5h8", "#3a80c8", 1.3) + p("M2 14h12", "#333") + dot(2, 14) + dot(14, 14) + star,
  sload: f("M2 8h12v6H2z", "#8fb5da") + p("M5 4v6M9 4v6M13 4v6M5 4h8", "#3a70b8", 1.3) + dot(2, 14) + dot(14, 14) + star,
  fload: p("M4 4h10M4 4v6M9 4v6M14 4v6M2 14h12l1-4M1 2l5 5M6 2L1 7", "#aaa", 1.3),
  impload: p("M4 3q-2 6 4 11M8 5q-2 4 1 9", "#3b7f4b", 1.8) + p("M10 9h5M12.500 9v6M10 15h5", "#666", 1.2) + star,
  sup2: f("M6 3l4 4H8l2 4H2l3-5z", "#2ba040") + dot(10, 11) + dot(14, 14) + star,
  frame: p("M3 14V4h10v10M5 14V6h6v8", "#aaa"), momentv: p("M1 3v5h2l5 7 5-7h2V3M3 8l5 2 5-2", "#999", 1.2), plate: f("M2 8l7-4 5 3v5l-6-3z", "#999"),
  cube3: p("M2 5l3-3h9v9l-3 3H2zM2 5h9v9M11 5l3-3", "#777", 1.3, "#ccc") + `<circle cx="6.500" cy="9" r="2.500" fill="#888"/>`,
  cross: p("M6 1v14M2 8h9M4 4h4M4 12h4M11 3h4M13 1v4", "#999", 1.3), wedge: f("M1 13L14 4v2L6 12z", "#999"),
  bm1: beam, bm2: beam + p("M4 3h8", "#aaa", 2), bm3: beam + p("M3 3h2M7 3h2M11 3h2", "#777", 2), bm4: p("M1 3h14M3 3v5M8 3v5M13 3v5M1 9h14M1 14q4-6 7 0t7 0", "#888", 1.3),
  bm5: p("M1 13h12M3 10L14 3M2 8h7", "#999", 1.500), starsurf: f("M3 10l8-4 4 2-6 5z", "#88a8d8") + box(9, 2) + star,
  tri: f("M1 3v11h11z", "#aaa") + p("M5 10l9-8", "#999", 1.500),
  csys: p("M1 13l6-3 8 3", "#2a9a40", 1.800) + p("M7 10L1 14", "#e05030", 1.800) + dot(7, 10) + box(7, 1),
  handgrid: p("M1 6h14M1 10h14M1 14h14M3 2v13M7 2v13M11 2v13", "#888", 1) + f("M3 2l8-1 4 4-5 3-4-2z", "#d9a878"),
  snap: p("M3 0v16M13 0v16M0 3h16M0 13h16", "#aab", 1) + `<circle cx="8" cy="8" r="3.500" fill="#fff" stroke="#2b4fc0" stroke-width="1.800"/>`,
  plane1: f("M3 7h12l-2 5H0z", "#7f9cc8") + p("M6 2v12M10 1v12", "#4a78b8", 1.500) + p("M0 10l15-3", "#c84050", 1.800),
  plane2: f("M6 3l5-2v10l-5 4z", "#d86a6a") + p("M1 8l14-3M2 12l12-3M9 1v14", "#4a78b8", 1.500),
  plane3: f("M3 3h11v10H3z", "#d0505c") + p("M1 7h13M4 12h10M7 2v13M11 2v12", "#4a78b8", 1.300),
  green: p("M1 2h14v12H1z", "#4a7a4a", 1.600, "#e2f0e2") + f("M3 12l9-8v8z", "#5aa860"),
  eye: p("M1 8q7-9 14 0q-7 8-14 0z", "#2b3f8c", 1.500, "#fff") + `<circle cx="8" cy="8" r="3" fill="#2b3f8c"/>`, cam: f("M2 4h8v8H2zM11 7l4-3v8l-4-3z", "#555"),
  navdata: f("M1 3h6l1 2h7v5H1z", "#e8b820") + f("M5 6h9v6H5z", "#4a78b8") + f("M8 10h6l-3 5z", "#d08020"),
  rowin: p("M1 4h6M1 8h3M1 12h6M15 8H7M10 5L7 8l3 3", "#8a8a8a", 1.500), rowout: p("M1 4h6M1 8h3M1 12h6M5 8h9M11 5l3 3-3 3", "#8a8a8a", 1.500),
  tblhead: p("M1 2h14v12H1z", "#666", 1.3, "#fff") + f("M2 3h12v3H2z", "#b9c0dc"),
  abbox: T(0, 15, "ab=", "#333", 7) + box(8, 1), fx: `<text x="1" y="12" font-size="13" font-style="italic" font-family="Liberation Serif" fill="#444">fx</text>`,
  excel: p("M3 1h11v14H3z", "#666", 1.2, "#fff") + f("M0 4h11v7H0z", "#5aa860") + p("M3 6l4 4M7 6l-4 4", "#fff", 1.3),
  num: f("M1 1h14v5H1z", "#8fd08f") + T(0, 14, "0,00", "#234", 7) + p("M8 15h7", "#2b4fc0", 1),
  newwin: p("M6 7h9v8H6z", "#555", 1.3, "#fff") + f("M6 7h9v2H6z", "#2b3f8c") + star,
  copywin: p("M1 2h10v8H1z", "#555", 1.2, "#fff") + p("M5 6h10v9H5z", "#555", 1.2, "#fff") + f("M1 2h10v2H1zM5 6h10v2H5z", "#2b3f8c"),
  checks: p("M1 3h4v4H1zM1 10h4v4H1zM2 5l1 1 3-4M8 10l2 2 5-6", "#999", 1.200), checks2: p("M1 3h4v4H1zM1 10h4v4H1zM8 5h6M8 9h7l-2 2", "#999", 1.200),
  redx: p("M3 3l10 10M13 3L3 13", "#f01010", 3),
  edit: p("M2 3h8M1 3v11h11M6 11l7-9 1 1-7 8z", "#7a8a9a", 1.200),
  pick: p("M2 1l4 4M6 1L2 5", "#e03030", 1.500) + p("M7 5v8l2-2 2 4 1.500-1-1.500-3h3z", "#777", 1, "#fff"),
  back: p("M2 4h8q5 1 4 4t-4 3H4M6 8l-3 3 3 3", "#555", 1.800), comments: p("M1 3h9v6H1zM4 6h10v6H4z", "#aaa", 1.300, "#d5d5d5"),
  render: f("M2 2h7v6H2z", "#b5b5b5") + f("M6 7h4v4H6z", "#8a8a8a") + p("M9 12q3-4 6 0M11 10l3 5", "#666", 1.500),
  colors: f("M1 1h4v4H1z", "#e03030") + f("M5 1h4v4H5z", "#3050d0") + f("M1 5h4v3H1z", "#40b040") + T(1, 15, "A", "#222", 8) + p("M8 7h7v5H8z", "#555", 1.200, "#fff"),
  view: p("M1 3h13v8H1z", "#7f90a8", 1.200, "#b9d0e8") + f("M5 5h8l-3 4v5H8V9z", "#4f7fa5"),
  folder: p("M1 3h5l1 1h8v10H1z", "#cfc27a", 1, "#f5edb4"), folderopen: p("M2 2h12v12H2z", "#cfc27a", 1, "#f5edb4") + p("M0 5h13v10H2z", "#cfc27a", 1, "#f9f3c8"),
  file: p("M3 1h8l3 3v11H3z", "#777", 1, "#fff") + f("M1 8l6-3 6 3-3 5-6-1z", "#3d5a8c"),
  mat: `<circle cx="4" cy="4" r="3.500" fill="#9fb4f0"/><circle cx="12" cy="4" r="3.500" fill="#f0d820"/><circle cx="4" cy="12" r="3.500" fill="#58c828"/><circle cx="12" cy="12" r="3.500" fill="#e84040"/>`,
  sect: f("M6 2h10l-2 11-6-1z", "#5a80c8") + p("M1 4h7M4.500 4v9M1 13h7", "#d03030", 2), thick: f("M1 5l3-2h11v6l-3 3H1z", "#88b0dc") + f("M12 5l3-2v6l-3 3z", "#4a70a0"),
  node: dot(8, 8), tline: p("M2 14L14 2", "#333") + dot(2, 14) + dot(14, 2),
  tmember: p("M2 13L12 2", "#9cc4e8", 3) + dot(2, 13) + dot(12, 2) + p("M9 9h6M12 9v6M9 15h6", "#777", 1.200),
  tsurf: f("M1 8l6-5 9 4-6 6z", "#5f8cc0"), topen: p("M2 2h12v12H2z", "#5f8cc0", 2.500, "#bcd4ee") + `<circle cx="8" cy="8" r="3" fill="#fff" stroke="#456"/>`,
  tsolid: f("M2 3h9v11H2z", "#8db8e4") + f("M11 3l4 1v9l-4 1z", "#4a70a0"),
  tlines: p("M2 14L13 2M2 14l12-5", "#333", 1.200) + dot(2, 14) + dot(13, 2) + dot(7, 8) + p("M9 12h6M12 9v6", "#222", 1.300),
  tmembers: p("M2 14L13 2M5 12l9-7", "#9cc4e8", 2) + dot(2, 14) + dot(13, 2) + dot(7, 12) + p("M9 12h6M12 9v6", "#222", 1.300),
  imp: p("M5 1q-3 7 3 11M11 3q-2 5-1 9M5 2l5 5", "#3b8f5b", 1.500) + p("M1 15h14", "#444", 1.600),
  impl: p("M5 2q-3 7 3 11M11 4q-2 5-1 9M5 2l5 5", "#3b8f5b", 1.500), impm: p("M3 1q-3 7 3 11M8 2q-2 5-1 9", "#3b8f5b", 1.500) + p("M10 9h5M12.500 9v5M10 14h5", "#777", 1.200),
  gen: p("M4 3q0-2 4-2t4 2M2 5h9v3H2zM2 8v5M6 8v5M11 8v5M13 4q4 5-1 9", "#5a6a90", 1.300) + dot(3, 14) + dot(10, 14),
  snow: `<circle cx="8" cy="8" r="6" fill="#5fb0dc"/>` + p("M8 1v14M2 5l12 6M14 5L2 11", "#1672a8", 1.800),
  wind: p("M4 1v14M4 3h10M4 6h8M4 9h7M4 12h5", "#4a70c0", 1.300), wind2: p("M8 1v14M3 4h10M2 7h12M3 10h10M1 14h14", "#6a8ac8", 1.200),
  axes: p("M7 2v8", "#2040d0", 1.800) + p("M7 10l-6 4", "#e03030", 1.800) + p("M7 10l8 3", "#30b030", 1.800), magnet: p("M4 14V7q0-4 4-4t4 4v7", "#3a50a0", 3) + p("M4 12v3M12 12v3", "#d03030", 3),
  clip: f("M2 7l4-3h7v8l-4 3H2z", "#5a80b0") + p("M1 9L13 1", "#334", 1.300), clip2: p("M3 5h10v9H3z", "#334", 1.300, "#5a80b0") + p("M1 2h3M12 2h3", "#334", 1.500),
  closed: p("M4 3l6 5-6 5", "#888", 2), opened: p("M1 5l6 6 6-6", "#444", 2.300)
};
icons.fxx = icons.fx + p("M8 1l6 6M14 1L8 7", "#777", 1.600);
icons.fxeye = icons.fx + eyeAt(8, 0, "#555");

const svg = (name, cls = "ic") => `<svg class="${cls}" viewBox="0 0 16 16">${icons[name] || ""}</svg>`;

document.querySelectorAll("svg[data-icon]").forEach(el => {
  el.setAttribute("viewBox", "0 0 16 16");
  el.innerHTML = icons[el.dataset.icon];
});

// ":" is a drag handle, "|" a separator, "v" a drop-down arrow, "*" marks a pressed button
document.querySelectorAll("[data-tools]").forEach(el => {
  el.innerHTML = el.dataset.tools.split(" ").map(t => {
    if (t === ":") return '<i class="handle"></i>';
    if (t === "|") return '<i class="sep"></i>';
    if (t === "v") return '<button class="drop" aria-label="Více"></button>';
    const on = t[0] === "*";
    return `<button class="tb${on ? " on" : ""}">${svg(on ? t.slice(1) : t)}</button>`;
  }).join("");
});

// level, state (+ closed, - open), icon or colour, label
const rows = `0,,rfem,RFEM
1,-,file,lkj.rf6* | Examples
2,-,folderopen,Základní objekty
3,+,mat,Materiály
3,+,sect,Průřezy
3,,thick,Tloušťky
3,+,node,Uzly
3,+,tline,Linie
3,+,tmember,Pruty
3,,tsurf,Plochy
3,,topen,Otvory
3,,tsolid,Tělesa
3,,tlines,Sady linií
3,-,tmembers,Sady prutů
4,,#55aaff,1 - 44;49;5
4,,#f5c400,2 - 43;48;5
3,,tsurf,Sady ploch
3,,tsolid,Sady těles
2,+,folder,Speciální objekty
2,+,folder,Typy pro uzly
2,+,folder,Typy pro linie
2,+,folder,Typy pro pruty
2,+,folder,Typy pro plochy
2,+,folder,Typy pro tělesa
2,+,folder,Typy pro speciální
2,+,folder,Typy pro ocelové
2,-,folderopen,Imperfekce
3,+,imp,Imperfekční
3,-,impl,Lokální imperfekce
4,-,folderopen,IS1
5,+,impm,Imperfekce
5,-,impm,Imperfekce
6,,#c8ffff,1
2,+,folder,Zatěžovací stavy
2,-,folderopen,Generátor zatížení
3,,gen,Zatížení na plochy
3,,gen,Zatížení na pruty
3,,snow,Zatížení sněhem
3,,wind,Profily větru
3,,wind2,Simulace větru
2,+,folder,Zatížení
2,+,folder,Výsledky
2,-,folderopen,Pomocné objekty
3,+,axes,Souřadné systémy
3,+,magnet,Úchopy objektů
3,,clip,Ořezávací roviny
3,,clip2,Ořezávací boxy`.split("\n");

document.getElementById("tree").innerHTML = rows.map((r, n) => {
  const [lvl, st, ic, label] = r.split(",");
  const exp = svg(st === "+" ? "closed" : st === "-" ? "opened" : "", "ic exp");
  const pic = ic[0] === "#" ? `<i class="sw" style="background:${ic}"></i>` : svg(ic, "ic pic");
  return `<li class="l${lvl}${n === 1 ? " bold" : ""}${ic === "snow" ? " sel" : ""}">${exp}${pic}<span>${label.replace(/;/g, ",")}</span></li>`;
}).join("");

// ground grid points
let dots = "";
for (let i = -30; i < 70; i++) {
  for (let j = -30; j < 60; j++) {
    const x = 235 + i * 21 + j * 9, y = 100 - i * 5 + j * 14;
    if (x > 235 && x < 1040 && y > 100 && y < 600) dots += `<rect x="${x}" y="${y}" width="1" height="1"/>`;
  }
}
document.getElementById("dots").innerHTML = dots;

const nodes = [[673, 172], [673, 187], [681, 189], [825, 170], [977, 228], [969, 241], [977, 243], [887, 260], [879, 273], [887, 275], [887, 350], [977, 318]];
document.getElementById("nodes").innerHTML = nodes.map(([x, y]) => `<rect x="${x - 2}" y="${y - 2}" width="4" height="4"/>`).join("");
```
